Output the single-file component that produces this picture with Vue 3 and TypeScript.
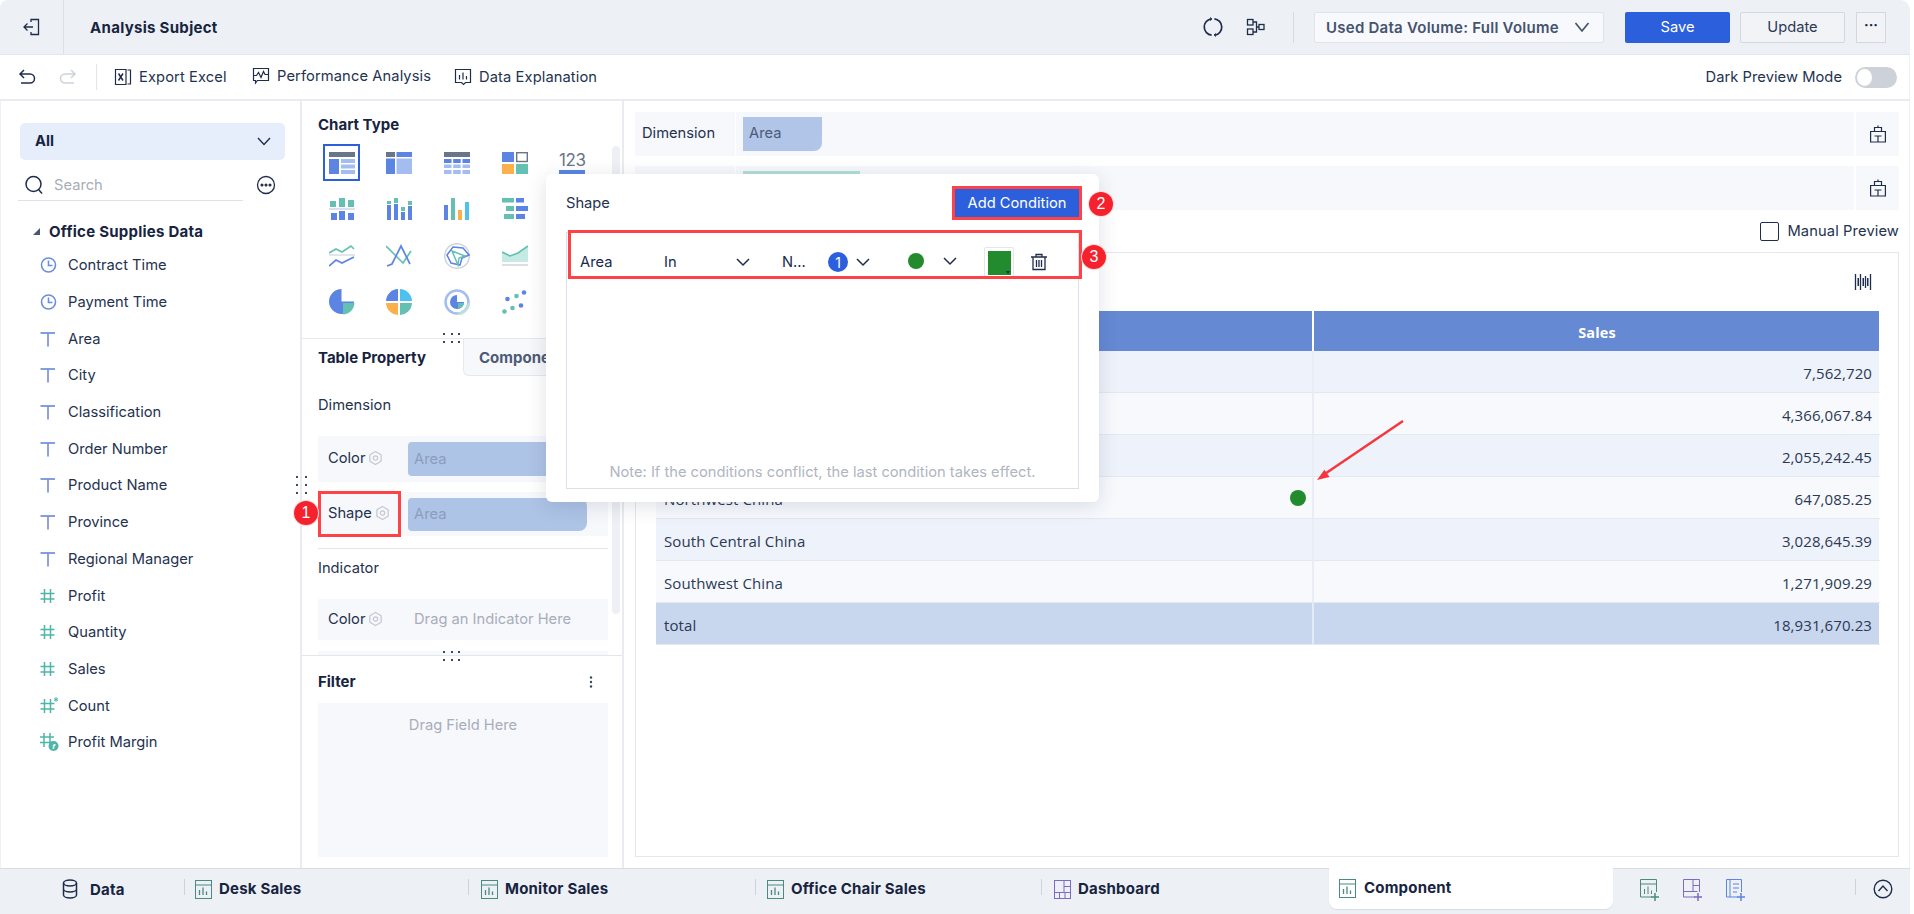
<script setup lang="ts">
const fields = [
  { n: 'Contract Time', k: 'time' }, { n: 'Payment Time', k: 'time' },
  { n: 'Area', k: 'text' }, { n: 'City', k: 'text' }, { n: 'Classification', k: 'text' },
  { n: 'Order Number', k: 'text' }, { n: 'Product Name', k: 'text' }, { n: 'Province', k: 'text' },
  { n: 'Regional Manager', k: 'text' }, { n: 'Profit', k: 'num' }, { n: 'Quantity', k: 'num' },
  { n: 'Sales', k: 'num' }, { n: 'Count', k: 'count' }, { n: 'Profit Margin', k: 'calc' },
]
const rows = [
  ['East China', '7,562,720'], ['North China', '4,366,067.84'], ['Northeast China', '2,055,242.45'],
  ['Northwest China', '647,085.25'], ['South Central China', '3,028,645.39'], ['Southwest China', '1,271,909.29'],
]
const tabs = [
  { n: 'Desk Sales', w: 284, p: 11 }, { n: 'Monitor Sales', w: 287, p: 13 }, { n: 'Office Chair Sales', w: 286, p: 12 },
]
</script>

<template>
  <div class="app">
    <header class="topbar">
      <div class="back">
        <svg width="20" height="20" viewBox="0 0 20 20" fill="none" stroke="#1f2d4d" stroke-width="1.3"><path d="M9 5V2.500h7.500v15H9V15M2 10h9M5.500 6.500 2 10l3.500 3.500"/></svg>
      </div>
      <div class="title">Analysis Subject</div>
      <div class="top-right">
        <svg class="ti" width="20" height="20" viewBox="0 0 20 20" fill="none" stroke="#1f2d4d" stroke-width="1.700"><path d="M8 1.800A8.300 8.300 0 0 0 8.600 18.200M12 18.200A8.300 8.300 0 0 0 11.400 1.800"/><path d="M7 .5l2 1.500-2 1.500M13 19.500l-2-1.500 2-1.500" stroke-width="1"/></svg>
        <svg class="ti2" width="20" height="20" viewBox="0 0 20 20" fill="none" stroke="#1f2d4d" stroke-width="1.300"><rect x="1.500" y="2.500" width="5.500" height="5.500"/><rect x="1.500" y="12" width="5.500" height="5.500"/><rect x="13" y="7.500" width="5" height="5"/><path d="M7 5h3.500v10H7M10.500 10H13"/></svg>
        <span class="vsep"></span>
        <div class="vol"><span>Used Data Volume: Full Volume</span>
          <svg width="16" height="16" viewBox="0 0 16 16" fill="none" stroke="#44536e" stroke-width="1.700"><path d="M1.500 4 8 12l6.500-8"/></svg>
        </div>
        <button class="save">Save</button>
        <button class="update">Update</button>
        <button class="more">···</button>
      </div>
    </header>

    <div class="toolbar">
      <svg class="undo" width="18" height="18" viewBox="0 0 18 18" fill="none" stroke="#1f2d4d" stroke-width="1.500"><path d="M6 2 2 6l4 4M2 6h10a4.200 4.200 0 0 1 0 9H3"/></svg>
      <svg class="redo" width="18" height="18" viewBox="0 0 18 18" fill="none" stroke="#cdd2db" stroke-width="1.500"><path d="M12 2l4 4-4 4M16 6H6a4.200 4.200 0 0 0 0 9h9"/></svg>
      <span class="tsep"></span>
      <div class="tool t1">
        <svg width="18" height="18" viewBox="0 0 18 18" fill="none" stroke="#1f2d4d" stroke-width="1.200"><path d="M13.500 2H16.500v14h-3M1.500 1.500l10.500 0v15H1.500z"/><path d="M4.500 5.500l4.500 7M9 5.500l-4.500 7" stroke-width="1.500"/></svg>
        <span>Export Excel</span>
      </div>
      <div class="tool t2">
        <svg width="18" height="18" viewBox="0 0 18 18" fill="none" stroke="#1f2d4d" stroke-width="1.200"><path d="M1.500 1.500h15v12h-11l-2 2.500v-2.500h-2z"/><path d="M1.500 8.500h3l2-3 2.500 5 2.500-6 1.500 3h3.500"/></svg>
        <span>Performance Analysis</span>
      </div>
      <div class="tool t3">
        <svg width="18" height="18" viewBox="0 0 18 18" fill="none" stroke="#1f2d4d" stroke-width="1.200"><path d="M1.500 1.500h15v13h-5l-2 2-2-2h-6z"/><path d="M5.500 7v4.500M9 4.500v7M12.500 8v3.500"/></svg>
        <span>Data Explanation</span>
      </div>
      <div class="dark">
        <span>Dark Preview Mode</span>
        <span class="toggle"><i></i></span>
      </div>
    </div>

    <div class="main">
      <aside class="left">
        <div class="all"><b>All</b>
          <svg width="16" height="16" viewBox="0 0 16 16" fill="none" stroke="#1f2d4d" stroke-width="1.400"><path d="M2 5l6 6.500L14 5"/></svg>
        </div>
        <div class="search-row">
          <div class="search">
            <svg width="20" height="20" viewBox="0 0 20 20" fill="none" stroke="#1f2d4d" stroke-width="1.500"><circle cx="9.500" cy="9" r="7.500"/><path d="M14.500 14.500l3.500 4"/></svg>
            <span>Search</span>
          </div>
          <svg class="ell" width="20" height="20" viewBox="0 0 20 20" fill="none" stroke="#1f2d4d" stroke-width="1.300"><circle cx="10" cy="10" r="8.500"/><circle cx="6" cy="10" r=".9" fill="#1f2d4d"/><circle cx="10" cy="10" r=".9" fill="#1f2d4d"/><circle cx="14" cy="10" r=".9" fill="#1f2d4d"/></svg>
        </div>
        <div class="group"><i class="tri"></i>Office Supplies Data</div>
        <div v-for="f in fields" :key="f.n" class="field">
          <span class="ficon">
            <svg v-if="f.k === 'time'" width="18" height="18" viewBox="0 0 18 18" fill="none" stroke="#6c8fdc" stroke-width="1.600"><circle cx="8.500" cy="9" r="7"/><path d="M8.500 4.500V9.500h4"/></svg>
            <svg v-else-if="f.k === 'text'" width="18" height="18" viewBox="0 0 18 18" fill="none" stroke-width="1.700"><path d="M.5 3h14.500" stroke="#6c8fdc"/><path d="M8 3v13.500" stroke="#7f8fdc"/></svg>
            <svg v-else-if="f.k === 'calc'" width="20" height="18" viewBox="0 0 20 18" fill="none" stroke="#4db6a8" stroke-width="1.500"><path d="M0 4h14M0 9.500h14M4 0v14M10 0v11"/><circle cx="13.500" cy="13" r="5" fill="#4db6a8" stroke="none"/><text x="13.500" y="16" text-anchor="middle" font-size="8" font-style="italic" font-weight="700" fill="#fff" stroke="none" font-family="Liberation Sans">f</text></svg>
            <svg v-else width="20" height="18" viewBox="0 0 20 18" fill="none" stroke="#4db6a8" stroke-width="1.500"><path d="M.5 6.500h14M.5 12h14M4.500 2v14M10.500 2v14"/><path v-if="f.k === 'count'" d="M16 0v5M14 1.500l4 2M18 1.500l-4 2" stroke-width="1"/></svg>
          </span>
          <span>{{ f.n }}</span>
        </div>
      </aside>

      <section class="mid">
        <div class="mid-top">
          <div class="sec-title">Chart Type</div>
          <div class="charts">
            <div class="c sel"><svg width="26" height="22" viewBox="0 0 26 22"><rect x="0" y="0" width="26" height="5" fill="#6a7588"/><rect x="0" y="7" width="10" height="15" fill="#5b84e3"/><rect x="12" y="7" width="14" height="4" fill="#a3bdf0"/><rect x="12" y="12.500" width="14" height="4" fill="#a3bdf0"/><rect x="12" y="18" width="14" height="4" fill="#a3bdf0"/></svg></div>
            <div class="c"><svg width="26" height="22" viewBox="0 0 26 22"><rect width="9" height="5" fill="#6a7588"/><rect x="10.500" width="15.500" height="5" fill="#5b84e3"/><rect y="6.500" width="9" height="15.500" fill="#5b84e3"/><rect x="10.500" y="6.500" width="15.500" height="15.500" fill="#a3bdf0"/></svg></div>
            <div class="c"><svg width="26" height="22" viewBox="0 0 26 22"><rect width="26" height="5" fill="#6a7588"/><g fill="#5b84e3"><rect y="7" width="7.500" height="4"/><rect x="9.200" y="7" width="7.500" height="4"/><rect x="18.500" y="7" width="7.500" height="4"/></g><g fill="#a3bdf0"><rect y="12.500" width="7.500" height="3.500"/><rect x="9.200" y="12.500" width="7.500" height="3.500"/><rect x="18.500" y="12.500" width="7.500" height="3.500"/><rect y="18" width="7.500" height="4"/><rect x="9.200" y="18" width="7.500" height="4"/><rect x="18.500" y="18" width="7.500" height="4"/></g></svg></div>
            <div class="c"><svg width="26" height="22" viewBox="0 0 26 22"><rect width="12" height="10" fill="#5b84e3"/><rect x="14.700" y=".7" width="10.600" height="8.800" fill="none" stroke="#6a7588" stroke-width="1.400"/><rect y="12" width="12" height="10" fill="#fbb04c"/><rect x="14" y="12" width="12" height="10" fill="#63c0b2"/></svg></div>
            <div class="c cnum"><span>123</span><i></i></div>

            <div class="c"><svg width="26" height="22" viewBox="0 0 26 22"><g fill="#63c0b2"><rect x="1" y="3" width="6" height="6"/><rect x="10" y="0" width="6" height="9"/><rect x="19" y="2" width="6" height="7"/></g><rect y="10.500" width="26" height="1" fill="#b9bfcb"/><g fill="#5b84e3"><rect x="2" y="15" width="6" height="7"/><rect x="10" y="13" width="6" height="9"/><rect x="19" y="15" width="6" height="7"/></g></svg></div>
            <div class="c"><svg width="26" height="22" viewBox="0 0 26 22"><g fill="#5b84e3"><rect x="1" y="7" width="4" height="15"/><rect x="8" y="6" width="4" height="16"/><rect x="15" y="14" width="4" height="8"/><rect x="22" y="8" width="4" height="14"/></g><g fill="#63c0b2"><rect x="1" y="3" width="4" height="3"/><rect x="8" y="0" width="4" height="5"/><rect x="15" y="9" width="4" height="4"/><rect x="22" y="3" width="4" height="4"/></g></svg></div>
            <div class="c"><svg width="26" height="22" viewBox="0 0 26 22"><rect x="0" y="7" width="4" height="15" fill="#5b84e3"/><rect x="7" y="0" width="4" height="22" fill="#63c0b2"/><rect x="14" y="12" width="4" height="10" fill="#fbb04c"/><rect x="21" y="4" width="4" height="18" fill="#4fc1f0"/></svg></div>
            <div class="c"><svg width="26" height="22" viewBox="0 0 26 22"><g fill="#63c0b2"><rect width="12" height="4.500"/><rect x="4" y="8" width="8" height="5"/><rect x="2" y="16" width="10" height="5"/></g><g fill="#5b84e3"><rect x="14" width="8" height="4.500"/><rect x="14" y="8" width="12" height="5"/><rect x="14" y="16" width="9" height="5"/></g></svg></div>
            <div></div>

            <div class="c"><svg width="26" height="23" viewBox="0 0 26 23" fill="none" stroke-width="1.700"><path d="M0 9l7-4 6 3 9-6 3 3" stroke="#63c0b2"/><path d="M0 11h26" stroke="#c6cbd6" stroke-width="1"/><path d="M0 22l7-6 6 3 12-6" stroke="#5b84e3"/></svg></div>
            <div class="c"><svg width="26" height="23" viewBox="0 0 26 23" fill="none" stroke-width="1.700"><path d="M0 2l9 9 8 8 8-12" stroke="#63c0b2"/><path d="M1 22l5-2 9-18 9 18" stroke="#5b84e3"/></svg></div>
            <div class="c"><svg width="26" height="26" viewBox="0 0 26 26" fill="none" stroke-width="1.500"><circle cx="13" cy="13" r="12.300" stroke="#cdd2dc"/><path d="M3 12l6-8 10 1 6 7-7 3-2 7-9-2z" stroke="#5b84e3"/><path d="M8 8l13 5-6 2-1 7z" stroke="#63c0b2"/></svg></div>
            <div class="c"><svg width="26" height="24" viewBox="0 0 26 24" fill="none"><path d="M0 8l8 4 8-3 10-7v16H0z" fill="#c5e9e3"/><path d="M0 8l8 4 8-3 10-7" stroke="#63c0b2" stroke-width="1.600"/><path d="M0 21h26" stroke="#b9bfcb"/></svg></div>
            <div></div>

            <div class="c"><svg width="26" height="26" viewBox="0 0 26 26"><path d="M12.500 0A12.500 12.500 0 1 0 25 12.500H12.500z" fill="#5b84e3"/><path d="M14 14h11.500A12 12 0 0 1 14 25.500z" fill="#63c0b2"/></svg></div>
            <div class="c"><svg width="26" height="26" viewBox="0 0 26 26"><path d="M12 12V0A12.500 12.500 0 0 0 0 12z" fill="#5b84e3"/><path d="M14 12V0a12.500 12.500 0 0 1 12 12z" fill="#4fc1f0"/><path d="M12 14H0a12.500 12.500 0 0 0 12 12z" fill="#fbb04c"/><path d="M14 14h12a12.500 12.500 0 0 1-12 12z" fill="#63c0b2"/></svg></div>
            <div class="c"><svg width="26" height="26" viewBox="0 0 26 26" fill="none"><circle cx="13" cy="13" r="11.500" stroke="#a3bdf0" stroke-width="2.500"/><path d="M13 6a7 7 0 1 0 7 7h-7z" fill="#5b84e3"/><path d="M14 14h6a6.500 6.500 0 0 1-6 6z" fill="#63c0b2"/><path d="M14 25a12 12 0 0 0 11-11" stroke="#b9e3dc" stroke-width="2.600"/></svg></div>
            <div class="c"><svg width="26" height="24" viewBox="0 0 26 24"><g fill="#5b84e3"><circle cx="5.500" cy="9" r="2.300"/><circle cx="22" cy="2.500" r="2.300"/><circle cx="19" cy="15.500" r="2.300"/></g><g fill="#63c0b2"><circle cx="14.500" cy="6" r="2.300"/><circle cx="10.500" cy="18" r="2.300"/><circle cx="2.500" cy="21.500" r="2.300"/></g></svg></div>
          </div>
          <div class="vscroll"></div>
        </div>

        <div class="dots h d1"><i v-for="n in 6" :key="n"></i></div>
        <div class="tabs">
          <div class="tab on">Table Property</div>
          <div class="tab">Component Style</div>
        </div>
        <div class="props">
          <div class="prop-title">Dimension</div>
          <div class="prop-row r1"><span class="lbl">Color<svg class="gear" width="15" height="16" viewBox="0 0 16 16" fill="none" stroke="#c3c8d2" stroke-width="1.300" stroke-linejoin="round"><path d="M8 1l6 3.500v7L8 15l-6-3.500v-7z"/><circle cx="8" cy="8" r="2.300"/></svg></span><span class="chip">Area</span></div>
          <div class="prop-row r2"><span class="lbl">Shape<svg class="gear" width="15" height="16" viewBox="0 0 16 16" fill="none" stroke="#c3c8d2" stroke-width="1.300" stroke-linejoin="round"><path d="M8 1l6 3.500v7L8 15l-6-3.500v-7z"/><circle cx="8" cy="8" r="2.300"/></svg></span><span class="chip c2">Area</span></div>
          <div class="prop-line"></div>
          <div class="prop-title ind">Indicator</div>
          <div class="prop-row r3"><span class="lbl">Color<svg class="gear" width="15" height="16" viewBox="0 0 16 16" fill="none" stroke="#c3c8d2" stroke-width="1.300" stroke-linejoin="round"><path d="M8 1l6 3.500v7L8 15l-6-3.500v-7z"/><circle cx="8" cy="8" r="2.300"/></svg></span><span class="ph">Drag an Indicator Here</span></div>
          <div class="prop-row r4"></div>
        </div>
        <div class="filter">
          <div class="dots h d2"><i v-for="n in 6" :key="n"></i></div>
          <div class="filter-head"><b>Filter</b>
            <svg width="4" height="12" viewBox="0 0 4 12" fill="#3a4760"><circle cx="2" cy="1.500" r="1.200"/><circle cx="2" cy="6" r="1.200"/><circle cx="2" cy="10.500" r="1.200"/></svg>
          </div>
          <div class="filter-box">Drag Field Here</div>
        </div>
      </section>

      <section class="right">
        <div class="dim-row">
          <div class="dim-lbl">Dimension</div>
          <div class="dim-body"><span class="dchip blue">Area</span></div>
          <div class="dim-act">
            <svg width="16" height="18" viewBox="0 0 16 18" fill="none" stroke="#1f2d4d" stroke-width="1.200"><path d="M.6 6.500h14.800v10.500H.6zM4.500 6.500V2.500h7v4M8 .5v2M4.500 11h7M8 11v6"/></svg>
          </div>
        </div>
        <div class="dim-row second">
          <div class="dim-lbl">Indicator</div>
          <div class="dim-body"><span class="dchip teal">Sales</span></div>
          <div class="dim-act">
            <svg width="16" height="18" viewBox="0 0 16 18" fill="none" stroke="#1f2d4d" stroke-width="1.200"><path d="M.6 6.500h14.800v10.500H.6zM4.500 6.500V2.500h7v4M8 .5v2M4.500 11h7M8 11v6"/></svg>
          </div>
        </div>
        <div class="manual"><span class="cb"></span>Manual Preview</div>
        <div class="preview">
          <div class="pv-tool">
            <svg width="18" height="18" viewBox="0 0 18 18" fill="none" stroke="#1f2d4d" stroke-width="1.300"><path d="M1.500 1v16M16.500 1v16M6.500 1v16M11.500 3v12"/><rect x="3.500" y="5" width="1.500" height="8" fill="#1f2d4d" stroke="none"/><rect x="8.500" y="5" width="1.500" height="8" fill="#1f2d4d" stroke="none"/><rect x="13" y="5" width="1.500" height="8" fill="#1f2d4d" stroke="none"/></svg>
          </div>
          <div class="tbl">
            <div class="tr head"><div class="td l">Area</div><div class="td r">Sales</div></div>
            <div v-for="(r, i) in rows" :key="r[0]" class="tr" :class="i % 2 ? 'even' : 'odd'">
              <div class="td l">{{ r[0] }}<i v-if="i === 3" class="gdot"></i></div>
              <div class="td r">{{ r[1] }}</div>
            </div>
            <div class="tr total"><div class="td l">total</div><div class="td r">18,931,670.23</div></div>
          </div>
        </div>
      </section>
    </div>

    <footer class="bottom">
      <div class="b-data">
        <svg width="18" height="20" viewBox="0 0 18 20" fill="none" stroke="#1f2d4d" stroke-width="1.500"><ellipse cx="9" cy="4" rx="6.500" ry="3"/><path d="M2.500 4v12c0 1.700 3 3 6.500 3s6.500-1.300 6.500-3V4M2.500 10c0 1.700 3 3 6.500 3s6.500-1.300 6.500-3"/></svg>
        <span>Data</span>
      </div>
      <div v-for="t in tabs" :key="t.n" class="b-tab" :style="{ width: t.w + 'px', paddingLeft: t.p + 'px' }">
        <svg width="17" height="19" viewBox="0 0 17 19" fill="none" stroke="#4a8a80" stroke-width="1"><rect x=".5" y=".5" width="16" height="18"/><path d="M.5 5h16" /><path d="M4.500 15V10M8 15V7.500M11.500 15v-3.500" stroke-width="1.300"/></svg>
        <span>{{ t.n }}</span>
      </div>
      <div class="b-tab dash">
        <svg width="17" height="19" viewBox="0 0 17 19" fill="none" stroke="#7c6bc4" stroke-width="1"><rect x=".5" y=".5" width="16" height="18"/><path d="M10 .5v12M.5 12.500h16M10 6.500h6.500M5.500 12.500v6M11 12.500v6"/></svg>
        <span>Dashboard</span>
      </div>
      <div class="b-active">
        <svg width="17" height="19" viewBox="0 0 17 19" fill="none" stroke="#4a8a80" stroke-width="1"><rect x=".5" y=".5" width="16" height="18"/><path d="M.5 5h16" /><path d="M4.500 15V10M8 15V7.500M11.500 15v-3.500" stroke-width="1.300"/></svg>
        <span>Component</span>
      </div>
      <div class="b-add">
        <svg width="20" height="22" viewBox="0 0 20 22" fill="none" stroke="#4a8a80" stroke-width="1"><path d="M12 18H.5V.5h16V13"/><path d="M.5 5h16"/><path d="M4.500 15V10M8 15V7.500M11.500 15v-3.500"/><path d="M11 18h8M15 14v8" stroke-width="1.500"/></svg>
        <svg width="20" height="22" viewBox="0 0 20 22" fill="none" stroke="#7c6bc4" stroke-width="1"><path d="M12 18H.5V.5h16V13"/><path d="M10 .5v12M.5 12.500h14M10 6.500h6.500"/><path d="M11 18h8M15 14v8" stroke-width="1.500"/></svg>
        <svg width="20" height="22" viewBox="0 0 20 22" fill="none" stroke="#5b84e3" stroke-width="1"><path d="M12 18H.5V.5h15V13"/><path d="M4 .5v17.500" /><path d="M7 5h6M7 9h6M7 13h4"/><path d="M11 18h8M15 14v8" stroke-width="1.500"/></svg>
      </div>
      <span class="b-sep"></span>
      <svg class="b-up" width="20" height="20" viewBox="0 0 20 20" fill="none" stroke="#1f2d4d" stroke-width="1.400"><circle cx="10" cy="10" r="8.800"/><path d="M5.500 12 10 7l4.500 5"/></svg>
    </footer>

    <div class="dots v"><i v-for="n in 6" :key="n"></i></div>

    <div class="popup">
      <div class="pop-head">
        <span>Shape</span>
        <button class="add">Add Condition</button>
      </div>
      <div class="pop-box">
        <div class="cond">
          <span class="c-area">Area</span>
          <span class="c-in">In</span>
          <svg class="chev" width="16" height="16" viewBox="0 0 16 16" fill="none" stroke="#1f2d4d" stroke-width="1.500"><path d="M2 5l6 6 6-6"/></svg>
          <span class="c-n">N...</span>
          <span class="c-badge">1</span>
          <svg class="chev c2v" width="16" height="16" viewBox="0 0 16 16" fill="none" stroke="#1f2d4d" stroke-width="1.500"><path d="M2 5l6 6 6-6"/></svg>
          <span class="c-sel"><i></i>
            <svg width="16" height="16" viewBox="0 0 16 16" fill="none" stroke="#1f2d4d" stroke-width="1.500"><path d="M2 5l6 6 6-6"/></svg>
          </span>
          <span class="c-color"><i></i></span>
          <svg class="c-trash" width="18" height="18" viewBox="0 0 18 18" fill="none" stroke="#1f2d4d" stroke-width="1.300"><path d="M1 4h16M6 4V1.500h6V4M3 4v12.500h12V4M6.500 7v7M9 7v7M11.500 7v7"/></svg>
        </div>
        <div class="note">Note: If the conditions conflict, the last condition takes effect.</div>
      </div>
    </div>

    <div class="mark m1"></div>
    <div class="mark m2"></div>
    <div class="mark m3"></div>
    <span class="nb n1">1</span>
    <span class="nb n2">2</span>
    <span class="nb n3">3</span>
    <svg class="arrow" width="100" height="70" viewBox="0 0 100 70" fill="none"><path d="M93 6 14 59.500" stroke="#f5363c" stroke-width="2.500"/><path d="M7 65l12.600-3-5.200-7.200z" fill="#f5363c"/></svg>
  </div>
</template>

<style>
html, body { margin: 0; padding: 0; background: #fff; }
</style>

<style scoped>
* { box-sizing: border-box; }
.app { position: relative; width: 1914px; height: 914px; overflow: hidden; background: #fff; color: #1b2a4a; font-family: Inter, "Liberation Sans", sans-serif; font-size: 14.7px; display: flex; flex-direction: column; }
button { font-family: inherit; }

.topbar { height: 55px; flex: none; display: flex; align-items: center; background: #edf0f5; border-bottom: 1px solid #e2e5ec; margin-right: 4px; border-radius: 8px 10px 0 0; }
.back { width: 64px; height: 54px; display: flex; align-items: center; justify-content: center; border-right: 1px solid #dde0e7; }
.title { margin-left: 26px; font-weight: 700; font-size: 15px; letter-spacing: .3px; color: #17243f; }
.top-right { margin-left: auto; display: flex; align-items: center; padding-right: 24px; }
.ti { margin-right: 23px; }
.ti2 { margin-right: 27px; }
.vsep { width: 1px; height: 31px; background: #d6d9e0; margin-right: 20px; }
.vol { width: 290px; height: 31px; background: #f7f9fc; border: 1px solid #dfe3ea; border-radius: 2px; display: flex; align-items: center; justify-content: space-between; padding: 0 13px 0 11px; color: #44536e; font-weight: 600; font-size: 15px; letter-spacing: .25px; white-space: nowrap; }
.save { width: 105px; height: 31px; margin-left: 21px; background: #2c5fdb; color: #fff; border: none; border-radius: 2px; font-size: 14.7px; }
.update { width: 105px; height: 31px; margin-left: 10px; background: #f1f3f7; color: #2b3954; border: 1px solid #d3d7df; border-radius: 2px; font-size: 14.7px; }
.more { width: 30px; height: 31px; margin-left: 11px; background: #f1f3f7; color: #1b2a4a; border: 1px solid #d3d7df; font-size: 14px; font-weight: 700; padding: 0 0 6px; }

.toolbar { height: 46px; flex: none; display: flex; align-items: center; border-bottom: 2px solid #e9ebf0; padding-left: 18px; margin-right: 4px; border-right: 1px solid #eef0f4; }
.undo { margin-right: 23px; }
.redo { margin-right: 19px; }
.tsep { width: 1px; height: 26px; background: #e2e5ea; margin-right: 17px; }
.tool { display: flex; align-items: center; gap: 7px; color: #24324f; white-space: nowrap; letter-spacing: .1px; }
.t1 { width: 138px; }
.t2 { width: 202px; margin-top: -2px; }
.dark { margin-left: auto; display: flex; align-items: center; gap: 13px; padding-right: 12px; color: #24324f; letter-spacing: .05px; }
.toggle { width: 42px; height: 21px; border-radius: 11px; background: #cdd1d9; position: relative; display: block; }
.toggle i { position: absolute; left: 2px; top: 2px; width: 15px; height: 17px; border-radius: 50%; background: #fff; }

.main { flex: 1; display: flex; min-height: 0; margin-right: 4px; border-right: 1px solid #eef0f4; }
.left { width: 302px; flex: none; border-right: 2px solid #e9ebf0; padding-top: 22px; border-left: 1px solid #f0f1f4; }
.all { height: 37px; width: 265px; margin-left: 19px; background: #e6eefc; border-radius: 5px; display: flex; align-items: center; justify-content: space-between; padding: 0 13px 2px 15px; color: #17243f; }
.all b { font-weight: 700; }
.search-row { display: flex; align-items: flex-start; height: 42px; padding-left: 17px; }
.search { width: 225px; height: 41px; border-bottom: 1px solid #dfe2e9; display: flex; align-items: center; gap: 10px; padding: 9px 0 0 6px; color: #a7adba; }
.ell { margin-left: 13px; margin-top: 15px; }
.group { height: 28px; display: flex; align-items: center; padding-left: 32px; margin-top: 15px; margin-bottom: 2px; font-weight: 700; font-size: 15px; letter-spacing: .25px; color: #17243f; }
.tri { width: 0; height: 0; border-style: solid; border-width: 0 0 7px 7px; border-color: transparent transparent #4a5672 transparent; margin-right: 9px; }
.field { height: 36.700px; display: flex; align-items: center; padding-left: 39px; color: #24324f; white-space: nowrap; }
.ficon { width: 28px; height: 18px; display: flex; flex: none; }

.mid { width: 322px; flex: none; position: relative; display: flex; flex-direction: column; border-right: 2px solid #e9ebf0; }
.mid-top { height: 237px; flex: none; position: relative; padding-left: 21px; }
.sec-title { padding-top: 14px; height: 43px; font-weight: 700; margin-left: -5px; color: #17243f; font-size: 15px; }
.charts { display: grid; grid-template-columns: repeat(5, 37px); grid-auto-rows: 37px; column-gap: 20.700px; row-gap: 9.500px; }
.c { display: flex; align-items: center; justify-content: center; }
.c.sel { border: 2px solid #2c5fdb; }
.c.cnum { flex-direction: column; }
.cnum span { font-size: 17px; line-height: 18px; color: #6a7588; letter-spacing: -0.500px; }
.cnum i { display: block; width: 26px; height: 4px; background: #5b84e3; margin-top: 1px; }
.vscroll { position: absolute; left: 310px; top: 45px; width: 8px; height: 468px; border-radius: 4px; background: #eef0f5; }

.dots { position: absolute; display: grid; }
.dots i { width: 2px; height: 2px; background: #3a4760; display: block; }
.dots.h { grid-template-columns: repeat(3, 2px); column-gap: 5.500px; row-gap: 6px; left: 141px; z-index: 3; }
.d1 { top: 232px; }
.d2 { top: -5px; }
.dots.v { grid-template-columns: repeat(2, 2px); column-gap: 7px; row-gap: 6px; left: 296px; top: 476px; }

.tabs { height: 38px; flex: none; display: flex; border-top: 1px solid #e6e8ee; }
.tab { width: 161px; padding-top: 9px; padding-left: 16px; font-weight: 700; font-size: 15px; color: #17243f; white-space: nowrap; }
.tab:not(.on) { flex: 1; background: #f7f8fc; border-left: 1px solid #e6e8ee; border-bottom: 1px solid #e6e8ee; color: #4d5b75; padding-left: 15px; border-radius: 0 0 0 6px; overflow: hidden; }
.props { height: 279px; flex: none; padding: 0 14px 0 16px; overflow: hidden; }
.prop-title { height: 60px; display: flex; align-items: center; color: #24324f; padding-bottom: 2px; }
.prop-row { height: 46px; background: #f7f8fc; display: flex; align-items: center; padding-left: 10px; width: 290px; }
.r2 { height: 44px; margin-top: 10px; }
.lbl { width: 80px; display: flex; align-items: center; gap: 3px; color: #24324f; flex: none; margin-top: -2px; }
.chip { width: 179px; height: 34px; background: #aec4e6; color: #8b9dbd; display: flex; align-items: center; padding-left: 6px; border-radius: 4px 8px 8px 4px; }
.chip.c2 { height: 33px; }
.prop-line { width: 290px; height: 1px; background: #e4e6ec; margin-top: 12px; }
.ind { height: 50px; padding-bottom: 12px; }
.r3 { height: 41px; }
.r4 { margin-top: 11px; }
.ph { color: #a7adba; margin: -2px 0 0 6px; white-space: nowrap; }

.filter { flex: 1; position: relative; border-top: 1px solid #e4e6ec; padding: 0 14px 0 16px; background: #fff; }
.filter-head { height: 47px; display: flex; align-items: center; justify-content: space-between; padding: 4px 15px 0 0; color: #17243f; }
.filter-head b { font-weight: 700; font-size: 15px; }
.filter-box { height: 154px; width: 290px; background: #f7f8fc; text-align: center; padding-top: 13px; color: #a7adba; }

.right { flex: 1; padding: 11px 10px 0 11px; display: flex; flex-direction: column; min-width: 0; }
.dim-row { height: 44px; flex: none; background: #f7f8fc; display: flex; }
.second { margin-top: 10px; }
.dim-lbl { width: 101px; flex: none; padding: 0 0 2px 7px; display: flex; align-items: center; border-right: 1px solid #fff; color: #24324f; }
.dim-body { flex: 1; padding: 5px 7px; }
.dchip { display: flex; align-items: center; height: 34px; padding: 0 0 2px 6px; border-radius: 0 0 8px 0; color: #4d5b75; }
.dchip.blue { width: 79px; background: #b0c5e8; }
.dchip.teal { width: 117px; background: #b0dfd9; }
.dim-act { width: 45px; flex: none; border-left: 2px solid #fff; display: flex; align-items: center; justify-content: center; }
.manual { height: 42px; flex: none; display: flex; align-items: center; justify-content: flex-end; color: #24324f; letter-spacing: .12px; }
.cb { width: 19px; height: 19px; border: 1px solid #1f2d4d; border-radius: 2px; margin-right: 8px; }
.preview { height: 605px; flex: none; border: 1px solid #e5e7ec; padding: 0 19px 0 20px; }
.pv-tool { height: 58px; display: flex; align-items: center; justify-content: flex-end; padding: 0 7px 0 0; }
.tbl { display: flex; flex-direction: column; }
.tr { display: grid; grid-template-columns: 658px 566px; height: 42px; font-family: "Open Sans", sans-serif; font-size: 15px; letter-spacing: .1px; color: #2b3954; }
.td { display: flex; align-items: center; padding: 2px 8px 0; border-bottom: 1px solid #e3e8f2; position: relative; white-space: nowrap; }
.td.l { border-right: 2px solid #e9edf6; }
.td.r { justify-content: flex-end; }
.head { height: 40px; background: #6589d3; color: #fff; font-weight: 700; font-size: 14.5px; }
.head .td { border-bottom: none; }
.head .td.r { justify-content: center; }
.head .td.l { border-right: 2px solid #fff; }
.odd { background: #eef2fa; }
.even { background: #f7f9fd; }
.total { background: #c8d6ee; }
.total .td.l { border-right: 2px solid #e4eaf6; }
.gdot { position: absolute; right: 6px; top: 13px; width: 16px; height: 16px; border-radius: 50%; background: #228b2e; }

.bottom { height: 46px; flex: none; display: flex; background: #edf0f5; border-top: 1px solid #d9dce3; align-items: flex-start; font-weight: 700; font-size: 15px; letter-spacing: .2px; color: #17243f; position: relative; margin-right: 4px; }
.b-data { width: 184px; height: 40px; display: flex; align-items: center; gap: 11px; padding-left: 61px; flex: none; }
.b-tab { height: 40px; display: flex; align-items: center; gap: 7px; position: relative; flex: none; white-space: nowrap; }
.b-tab::before { content: ""; position: absolute; left: 0; top: 10px; height: 16px; width: 1px; background: #cfd3db; }
.b-tab span { margin-top: -2px; }
.dash { width: 288px; padding-left: 13px; }
.b-active { width: 284px; height: 41px; margin-top: -1px; flex: none; background: #fff; border-radius: 0 0 8px 8px; display: flex; align-items: center; gap: 8px; padding-left: 10px; box-shadow: 0 1px 1px #d9dce3; }
.b-active span { margin-top: -2px; }
.b-add { display: flex; gap: 23px; padding: 10px 0 0 27px; flex: none; }
.b-sep { position: absolute; left: 1855px; top: 10px; width: 1px; height: 16px; background: #cfd3db; }
.b-up { position: absolute; left: 1873px; top: 10px; }

.popup { position: absolute; left: 546px; top: 174px; width: 553px; height: 328px; background: #fff; border-radius: 6px; box-shadow: 0 4px 20px rgba(30, 40, 70, .14); padding: 0 20px; z-index: 5; }
.pop-head { height: 58px; display: flex; align-items: center; justify-content: space-between; }
.pop-head span { color: #24324f; }
.add { width: 124px; height: 28px; border: none; background: #2c5fdb; color: #fff; font-size: 14.7px; padding: 0; white-space: nowrap; }
.pop-box { height: 257px; width: 513px; border: 1px solid #dcdfe8; display: flex; flex-direction: column; justify-content: space-between; }
.cond { height: 44px; display: flex; align-items: center; padding: 14px 0 0 13px; }
.c-area { width: 84px; flex: none; }
.c-in { width: 71px; flex: none; }
.chev { flex: none; }
.c-n { width: 46px; margin-left: 31px; flex: none; }
.c-badge { width: 20px; height: 20px; border-radius: 50%; background: #2c5fdb; color: #fff; display: flex; align-items: center; justify-content: center; flex: none; font-size: 14px; }
.c2v { margin-left: 7px; }
.c-sel { width: 78px; height: 30px; margin-left: 21px; flex: none; border-bottom: 1px solid #dfe2e9; display: flex; align-items: center; padding: 0 12px 2px 16px; justify-content: space-between; }
.c-sel i { width: 16px; height: 16px; border-radius: 50%; background: #228b2e; }
.c-color { width: 30px; height: 30px; margin-left: 14px; flex: none; border: 1px solid #e4e6ec; border-radius: 2px; padding: 3px 2px 1px 3px; position: relative; }
.c-color i { display: block; width: 23px; height: 24px; background: #228b2e; }
.c-color::after { content: ""; position: absolute; right: 3px; bottom: 2px; border-style: solid; border-width: 3px 2px 0 2px; border-color: #1b2a4a transparent transparent transparent; }
.c-trash { margin-left: 16px; flex: none; }
.note { text-align: center; line-height: 18px; padding-bottom: 7px; color: #b0b5c0; white-space: nowrap; }

.mark { position: absolute; border: 3px solid #ff4246; z-index: 6; }
.m1 { left: 318px; top: 491px; width: 83px; height: 46px; }
.m2 { left: 952px; top: 186px; width: 130px; height: 34px; }
.m3 { left: 568px; top: 230px; width: 514px; height: 49px; }
.nb { position: absolute; width: 24px; height: 24px; border-radius: 50%; background: #f5222d; color: #fff; display: flex; align-items: center; justify-content: center; font-family: "Liberation Sans", sans-serif; font-size: 16px; font-weight: 400; box-shadow: 0 0 0 1px #ffd9d9; z-index: 7; }
.n1 { left: 294px; top: 501px; }
.n2 { left: 1089px; top: 192px; }
.n3 { left: 1082px; top: 245px; }
.arrow { position: absolute; left: 1310px; top: 415px; z-index: 4; }
</style>
